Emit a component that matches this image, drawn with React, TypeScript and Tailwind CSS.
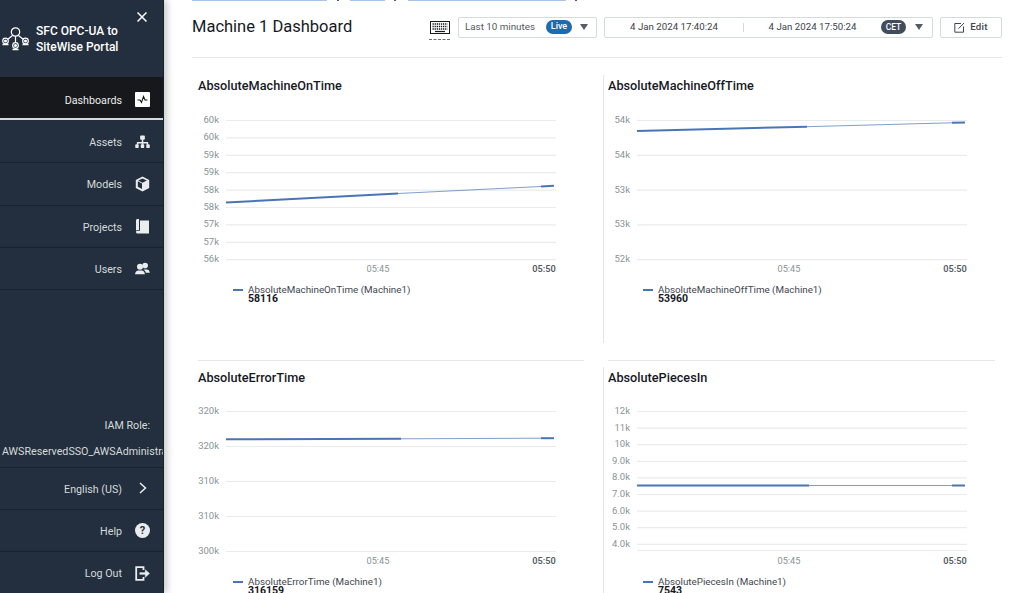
import type { ReactNode } from "react";

const FONT = "font-['Roboto','Noto_Sans',sans-serif]";

type Segment = { x1: number; y1: number; x2: number; y2: number };

type ChartProps = {
  title: string;
  value: string;
  ticks: { label: string; y: number }[];
  thick: Segment[];
  thin: Segment;
  right?: boolean;
  lower?: boolean;
};

function LogoIcon() {
  return (
    <svg width="29" height="24" viewBox="0 0 29 24" fill="none" stroke="white" strokeWidth="1.2">
      <circle cx="14.5" cy="5" r="4.2" />
      <path d="M14.5 9.2V16M11.5 8.5 6.5 12.5M17.5 8.5 22.5 12.5" />
      <circle cx="4.5" cy="14" r="2.8" />
      <circle cx="24.5" cy="14" r="2.8" />
      <circle cx="14.5" cy="18.5" r="2.8" />
      <path d="M1.5 17.5h6M21.5 17.5h6M11.5 22.5h6" strokeWidth="1.6" />
      <circle cx="4.5" cy="14" r="0.9" fill="white" />
      <circle cx="24.5" cy="14" r="0.9" fill="white" />
      <circle cx="14.5" cy="18.5" r="0.9" fill="white" />
    </svg>
  );
}

function DashIcon() {
  return (
    <div className="flex h-[15px] w-[15px] items-center justify-center rounded-[1px] bg-white">
      <svg width="11" height="9" viewBox="0 0 11 9" fill="none" stroke="#16191f" strokeWidth="1.1">
        <path d="M0.5 5H3L4.5 7.5 6.5 1.5 8 5H10.5" />
      </svg>
    </div>
  );
}

function AssetsIcon() {
  return (
    <svg width="16" height="14" viewBox="0 0 16 14" fill="#eaeded">
      <rect x="5.5" y="0" width="5" height="4.5" rx="1" />
      <rect x="7.2" y="4" width="1.6" height="6" />
      <path d="M2 10V7h12v3h-1.5V8.5h-9V10z" />
      <rect x="0.3" y="9.5" width="3.6" height="4" rx="1" />
      <rect x="6.2" y="9.5" width="3.6" height="4" rx="1" />
      <rect x="12.1" y="9.5" width="3.6" height="4" rx="1" />
    </svg>
  );
}

function ModelsIcon() {
  return (
    <svg width="15" height="16" viewBox="0 0 15 16">
      <path d="M7.5 0.5 14.2 4v8L7.5 15.5 0.8 12V4z" fill="#eaeded" />
      <path d="M2.8 5.2 7 7.5V13L2.8 10.8z" fill="#232f3e" />
      <path d="M7.5 2.4 11.8 4.6 7.5 6.8 3.2 4.6z" fill="#232f3e" />
    </svg>
  );
}

function ProjectsIcon() {
  return (
    <svg width="15" height="15" viewBox="0 0 15 15" fill="#eaeded">
      <path d="M1 1.5C1 .7 1.6 0 2.5 0H4v11H2.5C1.7 11 1 11.4 1 12z" />
      <path d="M5 1.5h9v13H2.5C1.6 14.5 1 13.8 1 13c0-.8.6-1.2 1.5-1.2H5z" />
    </svg>
  );
}

function UsersIcon() {
  return (
    <svg width="16" height="13" viewBox="0 0 16 13" fill="#eaeded">
      <circle cx="10.8" cy="3.3" r="3" />
      <path d="M9 7.5h3.8c1.5 0 2.7 1.3 3 3.5H11.5C11.3 9.5 10.5 8.3 9 7.5z" />
      <circle cx="5.3" cy="4.5" r="3.2" />
      <path d="M0 12.5C.3 10 1.7 8.5 3.5 8.5h3.6c1.8 0 3.2 1.5 3.5 4z" />
    </svg>
  );
}

function HelpIcon() {
  return (
    <div className="flex h-[15px] w-[15px] items-center justify-center rounded-full bg-[#eaeded] text-[11px] leading-none font-bold text-[#232f3e]">
      ?
    </div>
  );
}

function LogOutIcon() {
  return (
    <svg width="15" height="15" viewBox="0 0 15 15" fill="none" stroke="#eaeded" strokeWidth="1.8">
      <path d="M8.5 4V1.2H1.2v12.6h7.3V11" />
      <path d="M4.5 7.5H11.5" strokeWidth="2.2" />
      <path d="M10.3 3.8 14.5 7.5 10.3 11.2z" fill="#eaeded" strokeWidth="0.5" />
    </svg>
  );
}

function NavRow({ label, icon }: { label: string; icon: ReactNode }) {
  return (
    <div className="flex h-[42.3px] shrink-0 items-center justify-end gap-[13px] border-b border-[#18222e] pr-[13px] text-[#d5dbdb]">
      <span className="pt-[3px]">{label}</span>
      <div className="flex w-[15px] justify-center">{icon}</div>
    </div>
  );
}

function Sidebar() {
  return (
    <aside className="z-10 flex h-[593px] w-[164px] shrink-0 flex-col overflow-hidden border-r border-[#18222e] bg-[#232f3e] text-[10.7px] shadow-[3px_0_7px_rgba(0,0,0,0.22)]">
      <div className="relative flex h-[77px] shrink-0 items-center gap-[6px] pt-[1px] pl-[1px]">
        <LogoIcon />
        <div className="text-[12px] leading-[16px] font-medium text-white">
          SFC OPC-UA to
          <br />
          SiteWise Portal
        </div>
        <svg className="absolute top-[12px] left-[137px]" width="10" height="10" viewBox="0 0 10 10" stroke="white" strokeWidth="1.5">
          <path d="M0.5 0.5 9.5 9.5M9.5 0.5 0.5 9.5" />
        </svg>
      </div>
      <div className="flex h-[41px] shrink-0 items-center justify-end gap-[13px] bg-[#16181b] pt-[4px] pr-[13px] text-[#eaeded]">
        <span className="pt-[3px]">Dashboards</span>
        <DashIcon />
      </div>
      <div className="h-[3px] shrink-0 border-t-2 border-[#d5dbdb]" />
      <NavRow label="Assets" icon={<AssetsIcon />} />
      <NavRow label="Models" icon={<ModelsIcon />} />
      <NavRow label="Projects" icon={<ProjectsIcon />} />
      <NavRow label="Users" icon={<UsersIcon />} />
      <div className="flex-1" />
      <div className="h-[25px] shrink-0 pr-[13px] text-right leading-[27px] text-[#d5dbdb]">IAM Role:</div>
      <div className="h-[31px] shrink-0 overflow-hidden border-b border-[#18222e] pl-[2px] leading-[29px] whitespace-nowrap text-[#d5dbdb]">
        AWSReservedSSO_AWSAdministratorAccess
      </div>
      <div className="flex h-[42px] shrink-0 items-center justify-end gap-[17px] border-b border-[#18222e] pr-[16px] text-[#d5dbdb]">
        <span className="pt-[4px]">English (US)</span>
        <svg width="8" height="12" viewBox="0 0 8 12" fill="none" stroke="#eaeded" strokeWidth="1.5">
          <path d="M1 1 6.5 6 1 11" />
        </svg>
      </div>
      <NavRow label="Help" icon={<HelpIcon />} />
      <div className="flex h-[41px] shrink-0 items-center justify-end gap-[13px] pt-[1px] pr-[13px] text-[#d5dbdb]">
        <span className="pt-[3px]">Log Out</span>
        <LogOutIcon />
      </div>
    </aside>
  );
}

function Caret() {
  return (
    <svg width="8" height="6" viewBox="0 0 8 6" fill="#545b64">
      <path d="M0 0h8L4 6z" />
    </svg>
  );
}

function Header() {
  return (
    <div className="flex h-[56px] shrink-0 items-center border-b border-[#e4e7e7] pb-[5px]">
      <h1 className="text-[16.5px] leading-[22px] font-normal whitespace-nowrap text-[#16191f]">Machine 1 Dashboard</h1>
      <div className="mt-[10px] ml-auto flex h-[22px] w-[21px] flex-col items-center justify-start">
        <svg width="20" height="13" viewBox="0 0 20 13" fill="none" stroke="#16191f">
          <rect x="0.5" y="0.5" width="19" height="12" />
          <path d="M2.5 3h15M2.5 5.5h15M2.5 8h15" strokeWidth="1.3" strokeDasharray="1.3 0.8" />
          <path d="M5 10.5h10" strokeWidth="1.2" />
        </svg>
        <div className="mt-[5px] h-0 w-[21px] border-t border-dashed border-[#687078]" />
      </div>
      <div className="ml-[8px] flex h-[21px] w-[139px] shrink-0 items-center rounded-[2px] border border-[#d5dbdb] pl-[6px] text-[9.8px] whitespace-nowrap text-[#545b64]">
        <span>Last 10 minutes</span>
        <span className="ml-[11px] flex h-[14px] w-[26px] shrink-0 items-center justify-center rounded-full bg-[#1a6bb3] text-[9px] font-medium text-white">Live</span>
        <span className="ml-[8px]"><Caret /></span>
      </div>
      <div className="ml-[7px] flex h-[21px] w-[329px] shrink-0 items-center rounded-[2px] border border-[#d5dbdb] text-[9.7px] whitespace-nowrap text-[#3c434b]">
        <span className="w-[138px] text-center">4 Jan 2024 17:40:24</span>
        <div className="h-[9px] border-l border-[#d5dbdb]" />
        <span className="w-[137px] text-center">4 Jan 2024 17:50:24</span>
        <span className="flex h-[14px] w-[25px] shrink-0 items-center justify-center rounded-full bg-[#414d5c] text-[8.5px] font-medium text-white">CET</span>
        <span className="ml-[9px]"><Caret /></span>
      </div>
      <div className="ml-[7px] flex h-[21px] w-[62px] shrink-0 items-center justify-center gap-[5px] rounded-[2px] border border-[#d5dbdb] text-[9.7px] font-medium tracking-[0.3px] text-[#414750]">
        <svg width="11" height="11" viewBox="0 0 11 11" fill="none" stroke="#414750">
          <path d="M7 1.5H.8v8.7h8.7V4.5M4.5 6.7 10 1" />
        </svg>
        Edit
      </div>
    </div>
  );
}

function Chart({ title, value, ticks, thick, thin, right, lower }: ChartProps) {
  return (
    <div className={`h-[292px] ${right ? "pl-[5px]" : "pl-[6px]"}`}>
      {lower ? <div className="mt-[10px] h-[8px] border-t border-[#e4e7e7]" /> : <div className="h-[18px]" />}
      <div className="h-[19px] text-[12.7px] leading-[19px] font-medium whitespace-nowrap text-[#16191f]">{title}</div>
      <svg width="395" height="174" viewBox="0 0 395 174" className={`mt-[5px] block font-['Roboto',sans-serif] ${right ? "ml-[1px]" : ""}`}>
        {ticks.map((tick, i) => (
          <g key={i}>
            {tick.label && (
              <text x="21" y={tick.y + 3} textAnchor="end" fontSize="9.5" fill="#879596">
                {tick.label}
              </text>
            )}
            <line x1="28" x2="358" y1={tick.y + 0.5} y2={tick.y + 0.5} stroke="#e9ebed" strokeWidth="1.2" />
          </g>
        ))}
        <line x1={thin.x1} y1={thin.y1} x2={thin.x2} y2={thin.y2} stroke="#4c76b5" strokeOpacity="0.7" strokeWidth="1" />
        {thick.map((s, i) => (
          <line key={i} x1={s.x1} y1={s.y1} x2={s.x2} y2={s.y2} stroke="#4a75b5" strokeWidth="2" />
        ))}
        <text x="180" y="172" textAnchor="middle" fontSize="9.2" fill="#879596">05:45</text>
        <text x="346" y="172" textAnchor="middle" fontSize="9.2" fontWeight="600" fill="#545b64">05:50</text>
      </svg>
      <div className="ml-[35px] flex pt-[11px]">
        <div className="mt-[4px] h-[2px] w-[10px] bg-[#4a75b5]" />
        <div className="ml-[5px] text-[9.8px] leading-[9px] text-[#414750]">
          <div className="whitespace-nowrap">{title} (Machine1)</div>
          <div className="text-[10.5px] font-bold text-[#16191f]">{value}</div>
        </div>
      </div>
    </div>
  );
}

// y values are relative to the top of each chart svg (row 1: page y 100, row 2: page y 392)
const evenTicks = (labels: string[], top: number, step: number) =>
  labels.map((label, i) => ({ label, y: top + i * step }));

export default function App() {
  return (
    <div className={`flex h-[593px] w-[1020px] overflow-hidden bg-white ${FONT}`}>
      <Sidebar />
      <main className="flex h-[593px] flex-1 flex-col overflow-hidden pr-[18px] pl-[28px]">
        <div className="flex h-[2px] shrink-0">
          <div className="h-px w-[135px] bg-[#a9c4e6]" />
          <div className="ml-[10px] h-px w-[2px] bg-[#545b64]" />
          <div className="ml-[11px] h-px w-[35px] bg-[#a9c4e6]" />
          <div className="ml-[9px] h-px w-[2px] bg-[#545b64]" />
          <div className="ml-[12px] h-px w-[158px] bg-[#a9c4e6]" />
          <div className="ml-[9px] h-px w-[2px] bg-[#545b64]" />
        </div>
        <Header />
        <div className="grid shrink-0 grid-cols-[411px_399px]">
          <div className="pr-[19px]">
            <Chart
              title="AbsoluteMachineOnTime"
              value="58116"
              ticks={evenTicks(["60k", "60k", "59k", "59k", "58k", "58k", "57k", "57k", "56k"], 20, 17.4)}
              thick={[
                { x1: 28, y1: 102.5, x2: 200, y2: 93.5 },
                { x1: 343, y1: 86.5, x2: 356, y2: 85.8 },
              ]}
              thin={{ x1: 200, y1: 93.5, x2: 343, y2: 86.5 }}
            />
          </div>
          <div className="relative pr-[7px]">
            <div className="absolute top-[17px] left-0 h-[268px] border-l border-[#e4e7e7]" />
            <Chart
              right
              title="AbsoluteMachineOffTime"
              value="53960"
              ticks={evenTicks(["54k", "54k", "53k", "53k", "52k"], 20, 34.8)}
              thick={[
                { x1: 28, y1: 31, x2: 198, y2: 26.7 },
                { x1: 343, y1: 22.8, x2: 356, y2: 22.5 },
              ]}
              thin={{ x1: 198, y1: 26.7, x2: 343, y2: 22.8 }}
            />
          </div>
          <div className="pr-[19px]">
            <Chart
              lower
              title="AbsoluteErrorTime"
              value="316159"
              ticks={evenTicks(["320k", "320k", "310k", "310k", "300k"], 19, 35)}
              thick={[
                { x1: 28, y1: 47.3, x2: 203, y2: 46.8 },
                { x1: 343, y1: 46.2, x2: 356, y2: 46.2 },
              ]}
              thin={{ x1: 203, y1: 46.8, x2: 343, y2: 46.2 }}
            />
          </div>
          <div className="relative pr-[7px]">
            <div className="absolute top-[17px] left-0 h-[275px] border-l border-[#e4e7e7]" />
            <Chart
              right
              lower
              title="AbsolutePiecesIn"
              value="7543"
              ticks={[
                ...evenTicks(["12k", "11k", "10k", "9.0k", "8.0k", "7.0k", "6.0k", "5.0k", "4.0k"], 19, 16.6),
                { label: "", y: 158 },
              ]}
              thick={[
                { x1: 28, y1: 93.5, x2: 200, y2: 93.5 },
                { x1: 343, y1: 93.5, x2: 356, y2: 93.5 },
              ]}
              thin={{ x1: 200, y1: 93.5, x2: 343, y2: 93.5 }}
            />
          </div>
        </div>
      </main>
    </div>
  );
}
